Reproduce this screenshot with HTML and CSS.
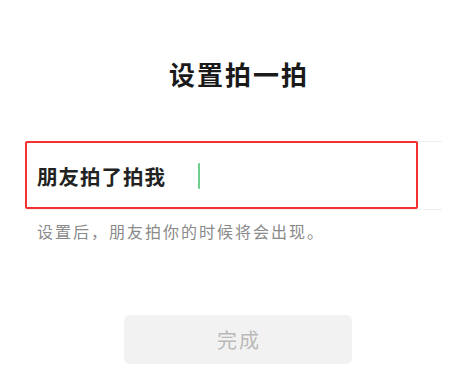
FILE: index.html
```html
<!DOCTYPE html>
<html lang="zh-CN">
<head>
<meta charset="utf-8">
<title>设置拍一拍</title>
<link rel="stylesheet" href="styles.css">
</head>
<body>
<div class="page">
  <h1 class="title">设置拍一拍</h1>
  <div class="form">
    <div class="cell">
      <span class="value">朋友拍了拍我</span><span class="cursor"></span>
      <div class="highlight"></div>
    </div>
    <p class="hint">设置后，朋友拍你的时候将会出现。</p>
  </div>
  <div class="actions">
    <button class="done" type="button">完成</button>
  </div>
</div>
</body>
</html>
```
FILE: styles.css
```css
html, body {
  margin: 0;
  padding: 0;
  background: #ffffff;
}
body {
  font-family: "Noto Sans CJK SC", "Noto Sans", sans-serif;
  width: 475px;
  height: 378px;
  overflow: hidden;
}
.page {
  padding-top: 59px;
  display: flex;
  flex-direction: column;
}
.title {
  margin: 0;
  font-size: 26px;
  line-height: 30px;
  font-weight: 700;
  letter-spacing: 2px;
  text-align: center;
  padding-left: 3px;
  color: #1a1a1a;
}
.form {
  margin-top: 52px;
  margin-left: 27px;
  width: 415px;
}
.cell {
  position: relative;
  height: 69px;
  box-sizing: border-box;
  border-top: 1px solid #efefef;
  border-bottom: 1px solid #efefef;
  display: flex;
  align-items: center;
  padding-left: 10px;
}
.value {
  font-size: 20.5px;
  line-height: 26px;
  font-weight: 600;
  letter-spacing: 1px;
  color: #222222;
}
.cursor {
  width: 2px;
  height: 26px;
  background: #6ccf8c;
  border-radius: 1px;
  margin-left: 32px;
}
.highlight {
  position: absolute;
  left: -2px;
  top: -1px;
  width: 393px;
  height: 68px;
  box-sizing: border-box;
  border: 2px solid #f5302e;
  border-radius: 2px;
}
.hint {
  margin: 11px 0 0 0;
  padding-left: 10px;
  font-size: 16px;
  line-height: 20px;
  letter-spacing: 2px;
  color: #8a8a8a;
}
.actions {
  display: flex;
  justify-content: center;
  margin-top: 74px;
  padding-left: 1px;
}
.done {
  width: 228px;
  height: 49px;
  border: none;
  border-radius: 6px;
  background: #f2f2f2;
  font-family: "Noto Sans CJK SC", "Noto Sans", sans-serif;
  font-size: 20px;
  letter-spacing: 2px;
  padding: 0 0 0 2px;
  color: #b9b9b9;
}
```
